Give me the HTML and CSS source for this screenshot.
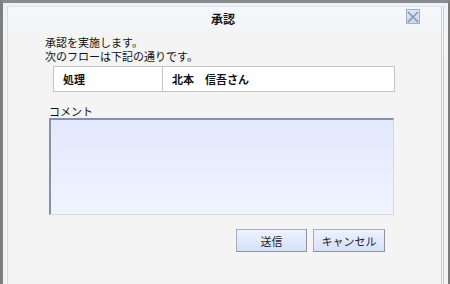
FILE: index.html
```html
<!DOCTYPE html>
<html lang="ja">
<head>
<meta charset="utf-8">
<link rel="stylesheet" href="styles.css">
</head>
<body>
<div class="window">
  <div class="panel">
    <div class="titlebar">
      <span class="title">承認</span>
      <span class="close" aria-label="閉じる">
        <svg width="12" height="12" viewBox="0 0 12 12"><path d="M1 1 L11 11 M11 1 L1 11" stroke="#8c96a8" stroke-width="1.6" fill="none"/></svg>
      </span>
    </div>
    <div class="content">
      <div class="msg">承認を実施します。</div>
      <div class="msg">次のフローは下記の通りです。</div>
      <div class="flow">
        <div class="cell head">処理</div>
        <div class="cell">北本　信吾さん</div>
      </div>
      <div class="label">コメント</div>
      <div class="comment"></div>
      <div class="actions">
        <button class="btn">送信</button>
        <button class="btn">キャンセル</button>
      </div>
    </div>
  </div>
</div>
</body>
</html>
```
FILE: styles.css
```css
html, body {
  margin: 0;
  padding: 0;
}
body {
  width: 450px;
  height: 284px;
  overflow: hidden;
  font-family: "Noto Sans CJK JP", "Noto Sans", sans-serif;
  font-size: 11px;
  color: #111;
  background: #f4f4f4;
}
.window {
  box-sizing: border-box;
  width: 450px;
  height: 284px;
  border-top: 3px solid #8a8a8a;
  border-left: 3px solid #7e7e7e;
  border-right: 2px solid #7a7a7a;
  background: linear-gradient(#eef1f8 0, #f2f3f6 30px, #f4f4f4 60px);
  padding: 3px 4px 0 4px;
  display: flex;
}
.panel {
  flex: 1;
  border-left: 1px solid #dcdcdc;
  border-right: 3px double #cfcfcf;
  border-top: 1px solid #dfe2ee;
  background: linear-gradient(#f6f8fd 0, #f3f4f7 22px, #f4f4f4 26px);
  display: flex;
  flex-direction: column;
}
.titlebar {
  height: 22px;
  display: flex;
  align-items: center;
  justify-content: center;
  position: relative;
}
.title {
  font-weight: bold;
  font-size: 12px;
  margin-left: -3px;
}
.close {
  position: absolute;
  right: 21px;
  top: 2px;
  width: 14px;
  height: 15px;
  box-sizing: border-box;
  border: 1px solid #9fb0cc;
  background: linear-gradient(#dbe6f7, #c8d7ef);
  display: flex;
  align-items: center;
  justify-content: center;
}
.content {
  padding: 6px 0 0 37px;
}
.msg {
  height: 14px;
  line-height: 14px;
  font-size: 11px;
}
.flow {
  display: grid;
  grid-template-columns: 109px 1fr;
  margin: 3px 0 0 8px;
  width: 342px;
  height: 26px;
  box-sizing: border-box;
  border: 1px solid #c4c4c4;
  background: #fff;
}
.cell {
  display: flex;
  align-items: center;
  padding-left: 9px;
  font-weight: bold;
  font-size: 11px;
}
.cell.head {
  border-right: 1px solid #c4c4c4;
}
.label {
  margin: 13px 0 0 4px;
  font-size: 11px;
  line-height: 13px;
}
.comment {
  margin-left: 4px;
  width: 345px;
  height: 97px;
  box-sizing: border-box;
  border-top: 2px solid #8890a8;
  border-left: 2px solid #8890a8;
  border-right: 1px solid #d8d8e0;
  border-bottom: 1px solid #d8d8e0;
  background: linear-gradient(#e2e9fc, #f0f4ff);
}
.actions {
  display: flex;
  gap: 6px;
  margin: 14px 0 0 191px;
}
.btn {
  width: 71px;
  height: 23px;
  padding: 0;
  box-sizing: border-box;
  border: 1px solid #a8acb8;
  border-right-color: #8e929e;
  border-bottom-color: #8e929e;
  background: linear-gradient(#eef2fe, #d6e0fb);
  font-family: "Noto Sans CJK JP", "Noto Sans", sans-serif;
  font-size: 11px;
  color: #222;
}
.btn + .btn {
  width: 72px;
}
```
